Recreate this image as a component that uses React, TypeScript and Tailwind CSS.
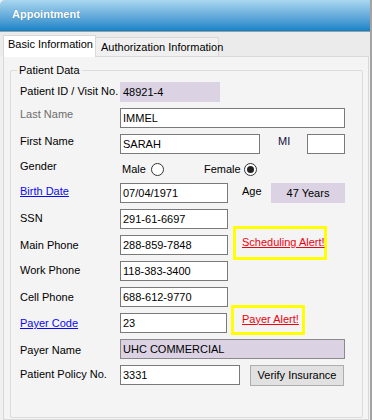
import React from "react";

function Label({ children, cls }: { children: React.ReactNode; cls: string }) {
  return <div className={"w-[100px] shrink-0 leading-[13px] whitespace-nowrap " + cls}>{children}</div>;
}

function Field({ children, cls }: { children?: React.ReactNode; cls: string }) {
  return (
    <div className={"h-[20px] shrink-0 border border-[#7a7a7a] bg-white pl-[2px] flex items-center leading-[13px] whitespace-nowrap " + cls}>
      {children}
    </div>
  );
}

export default function App() {
  return (
    <div className="w-[372px] h-[420px] overflow-hidden flex flex-col bg-[#f0f0f0] border-r-2 border-[#a3a3a3] font-['Liberation_Sans',Arial,sans-serif] text-[11px] text-black">
      <div className="h-[32px] shrink-0 border-b border-[#9c9c9c] bg-gradient-to-b from-[#a9d7ef] to-[#0a83c7] flex items-center pl-[12px] pb-[3px] rounded-tl-[5px]">
        <span className="text-white font-bold text-[11px] leading-[13px] [text-shadow:0_0_1px_rgba(0,40,80,0.4)]">Appointment</span>
      </div>
      <div className="h-[24px] shrink-0 bg-[#ebebeb] flex items-end pl-[3px] relative z-10">
        <div className="w-[93px] h-[22px] bg-white border border-b-0 border-[#d9d9d9] pl-[4px] pt-[2px] mb-[-1px] leading-[13px] whitespace-nowrap">
          Basic Information
        </div>
        <div className="w-[123px] h-[19px] bg-[#f0f0f0] border border-b-0 border-l-0 border-[#d9d9d9] pl-[5px] flex items-center leading-[13px] whitespace-nowrap">
          Authorization Information
        </div>
      </div>
      <div className="flex-1 ml-[3px] mr-[1px] border border-[#d9d9d9] bg-[#f4f4f4] pt-[13px] pl-[6px] pr-[5px]">
        <div className="relative h-[348px] border border-[#dcdcdc] rounded-[2px] pt-[11px] pl-[9px]">
          <span className="absolute top-[-7px] left-[6px] px-[2px] bg-[#f4f4f4] leading-[13px]">Patient Data</span>

          <div className="h-[26px] flex items-start">
            <Label cls="pt-[3px]">Patient ID / Visit No.</Label>
            <div className="w-[100px] h-[20px] bg-[#dbd3e4] pl-[3px] flex items-center leading-[13px]">48921-4</div>
          </div>

          <div className="h-[26px] flex items-start">
            <Label cls="pt-[0px] text-[#6d6d6d]">Last Name</Label>
            <Field cls="w-[225px]">IMMEL</Field>
          </div>

          <div className="h-[26px] flex items-start">
            <Label cls="pt-[1px]">First Name</Label>
            <Field cls="w-[140px]">SARAH</Field>
            <div className="w-[47px] shrink-0 pl-[18px] pt-[1px] leading-[13px] text-[#101040]">MI</div>
            <Field cls="w-[38px]" />
          </div>

          <div className="h-[23px] flex items-start">
            <Label cls="pt-[0px]">Gender</Label>
            <div className="w-[31px] shrink-0 pl-[2px] pt-[3px] leading-[13px]">Male</div>
            <div className="w-[13px] h-[13px] mt-[3px] shrink-0 rounded-full border border-[#333333] bg-white" />
            <div className="w-[40px] shrink-0" />
            <div className="w-[40px] shrink-0 pt-[3px] leading-[13px]">Female</div>
            <div className="w-[13px] h-[13px] mt-[3px] shrink-0 rounded-full border border-[#333333] bg-white flex items-center justify-center">
              <div className="w-[7px] h-[7px] rounded-full bg-[#222222]" />
            </div>
          </div>

          <div className="h-[26px] flex items-start">
            <Label cls="pt-[2px] text-[#0b0bf0] underline">Birth Date</Label>
            <Field cls="w-[108px]">07/04/1971</Field>
            <div className="w-[43px] shrink-0 pl-[14px] pt-[2px] leading-[13px]">Age</div>
            <div className="w-[74px] h-[20px] bg-[#dbd3e4] flex items-center justify-center leading-[13px]">47 Years</div>
          </div>

          <div className="h-[26px] flex items-start">
            <Label cls="pt-[3px]">SSN</Label>
            <Field cls="w-[108px]">291-61-6697</Field>
          </div>

          <div className="h-[26px] flex items-start">
            <Label cls="pt-[4px]">Main Phone</Label>
            <Field cls="w-[108px]">288-859-7848</Field>
            <div className="ml-[5px] mt-[-9px] w-[94px] h-[34px] shrink-0 border-[3px] border-[#ffff00] pl-[6px] pb-[1px] flex items-center leading-[13px] text-[#f00010] underline whitespace-nowrap">
              Scheduling Alert!
            </div>
          </div>

          <div className="h-[26px] flex items-start">
            <Label cls="pt-[3px]">Work Phone</Label>
            <Field cls="w-[108px]">118-383-3400</Field>
          </div>

          <div className="h-[26px] flex items-start">
            <Label cls="pt-[4px]">Cell Phone</Label>
            <Field cls="w-[108px]">688-612-9770</Field>
          </div>

          <div className="h-[26px] flex items-start">
            <Label cls="pt-[4px] text-[#0b0bf0] underline">Payer Code</Label>
            <Field cls="w-[107px]">23</Field>
            <div className="ml-[4px] mt-[-8px] w-[74px] h-[30px] shrink-0 border-[3px] border-[#ffff00] pl-[8px] pb-[2px] flex items-center leading-[13px] text-[#f00010] underline whitespace-nowrap">
              Payer Alert!
            </div>
          </div>

          <div className="h-[26px] flex items-start">
            <Label cls="pt-[5px]">Payer Name</Label>
            <div className="w-[225px] h-[20px] border border-[#8a8a8a] bg-[#dbd3e4] pl-[2px] flex items-center leading-[13px]">UHC COMMERCIAL</div>
          </div>

          <div className="h-[26px] flex items-start">
            <Label cls="pt-[3px]">Patient Policy No.</Label>
            <Field cls="w-[120px]">3331</Field>
            <div className="ml-[10px] w-[94px] h-[21px] shrink-0 bg-[#e1e1e1] border border-[#adadad] flex items-center justify-center leading-[13px] whitespace-nowrap">
              Verify Insurance
            </div>
          </div>
        </div>
      </div>
    </div>
  );
}
